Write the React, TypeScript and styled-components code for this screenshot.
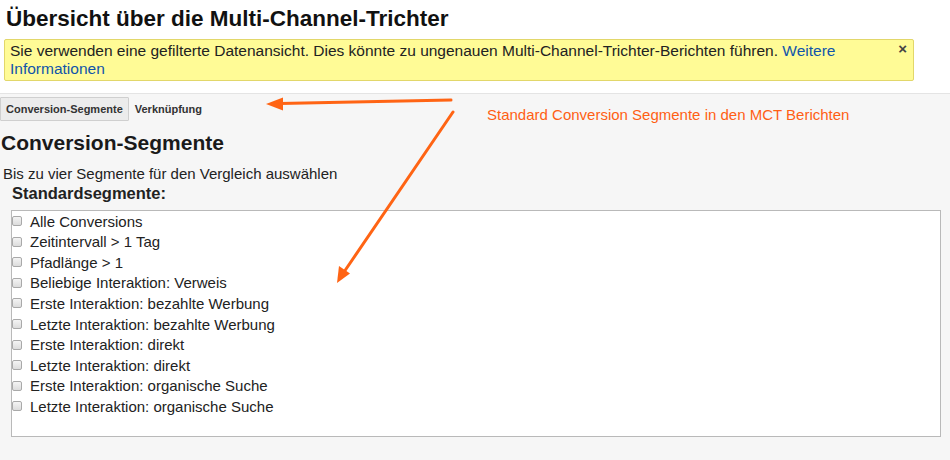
import React from "react";
import styled, { createGlobalStyle } from "styled-components";

const GlobalStyle = createGlobalStyle`
  html, body {
    margin: 0;
    padding: 0;
    background: #f6f6f6;
    font-family: Arial, "Liberation Sans", Helvetica, sans-serif;
    color: #222;
  }
`;

const Page = styled.div`
  position: relative;
  width: 950px;
  height: 460px;
  overflow: hidden;
  background: #f6f6f6;
`;

const Header = styled.header`
  background: #fff;
  padding: 6px 4px 12px 4px;
  border-bottom: 1px solid #e4e4e4;
`;

const Title = styled.h1`
  margin: 0 0 7px 2px;
  font-size: 22.5px;
  line-height: 26px;
  font-weight: bold;
  color: #111;
`;

const Notice = styled.div`
  position: relative;
  width: 910px;
  height: 42px;
  box-sizing: border-box;
  padding: 2px 30px 2px 5px;
  background: #fffb96;
  border: 1px solid #e2d76a;
  border-radius: 2px;
  font-size: 15.5px;
  line-height: 18px;
  color: #222;
`;

const NoticeLink = styled.a`
  color: #1155aa;
  text-decoration: none;
`;

const Close = styled.span`
  position: absolute;
  top: 0;
  right: 6px;
  font-size: 15px;
  font-weight: bold;
  color: #444;
`;

const Body = styled.section`
  padding: 3px 0 0 0;
`;

const Tabs = styled.div`
  display: flex;
  align-items: center;
  height: 24px;
`;

const Tab = styled.div<{ $active?: boolean }>`
  height: 22px;
  line-height: 22px;
  padding: 0 5px;
  font-size: 11px;
  font-weight: bold;
  color: #333;
  background: ${(p) => (p.$active ? "#ececec" : "transparent")};
  border: 1px solid ${(p) => (p.$active ? "#cfcfcf" : "transparent")};
  border-radius: 1px;
`;

const SectionTitle = styled.h2`
  margin: 10px 0 0 1px;
  font-size: 21px;
  line-height: 24px;
  font-weight: bold;
  color: #1a1a1a;
`;

const Hint = styled.p`
  margin: 10px 0 0 3px;
  font-size: 15px;
  line-height: 18px;
  color: #222;
`;

const Group = styled.div`
  margin: 1px 0 0 11px;
`;

const GroupTitle = styled.h3`
  margin: 0 0 8px 1px;
  font-size: 16.5px;
  line-height: 18px;
  font-weight: bold;
  color: #222;
`;

const SegmentBox = styled.ul`
  list-style: none;
  margin: 0;
  padding: 0;
  width: 930px;
  height: 227px;
  box-sizing: border-box;
  background: #fff;
  border: 1px solid #b9b9b9;
`;

const Segment = styled.li`
  display: flex;
  align-items: center;
  height: 20.55px;
  font-size: 15px;
  color: #222;
`;

const Box = styled.span`
  width: 8px;
  height: 8px;
  margin: 0 8px 0 0;
  border: 1px solid #a9a9a9;
  border-radius: 2px;
  background: linear-gradient(#f4f4f4, #dcdcdc);
`;

const Overlay = styled.svg`
  position: absolute;
  left: 0;
  top: 0;
  pointer-events: none;
`;

const Annotation = styled.div`
  position: absolute;
  left: 487px;
  top: 106px;
  font-size: 15px;
  color: #ff5f14;
`;

const segments = [
  "Alle Conversions",
  "Zeitintervall > 1 Tag",
  "Pfadlänge > 1",
  "Beliebige Interaktion: Verweis",
  "Erste Interaktion: bezahlte Werbung",
  "Letzte Interaktion: bezahlte Werbung",
  "Erste Interaktion: direkt",
  "Letzte Interaktion: direkt",
  "Erste Interaktion: organische Suche",
  "Letzte Interaktion: organische Suche",
];

export default function App() {
  return (
    <Page>
      <GlobalStyle />
      <Header>
        <Title>Übersicht über die Multi-Channel-Trichter</Title>
        <Notice>
          Sie verwenden eine gefilterte Datenansicht. Dies könnte zu ungenauen
          Multi-Channel-Trichter-Berichten führen.{" "}
          <NoticeLink href="#">Weitere Informationen</NoticeLink>
          <Close>×</Close>
        </Notice>
      </Header>
      <Body>
        <Tabs>
          <Tab $active>Conversion-Segmente</Tab>
          <Tab>Verknüpfung</Tab>
        </Tabs>
        <SectionTitle>Conversion-Segmente</SectionTitle>
        <Hint>Bis zu vier Segmente für den Vergleich auswählen</Hint>
        <Group>
          <GroupTitle>Standardsegmente:</GroupTitle>
          <SegmentBox>
            {segments.map((s) => (
              <Segment key={s}>
                <Box />
                {s}
              </Segment>
            ))}
          </SegmentBox>
        </Group>
      </Body>
      <Annotation>Standard Conversion Segmente in den MCT Berichten</Annotation>
      <Overlay width="950" height="460" viewBox="0 0 950 460">
        <g stroke="#ff6414" strokeWidth="3" strokeLinecap="round" fill="none">
          <line x1="451" y1="100" x2="280" y2="103.6" />
          <line x1="453" y1="112" x2="344" y2="272" />
        </g>
        <g fill="#ff6414">
          <polygon points="266,104 283,97.6 283,110.4" />
          <polygon points="337,283 339,266 350,273.5" />
        </g>
      </Overlay>
    </Page>
  );
}
